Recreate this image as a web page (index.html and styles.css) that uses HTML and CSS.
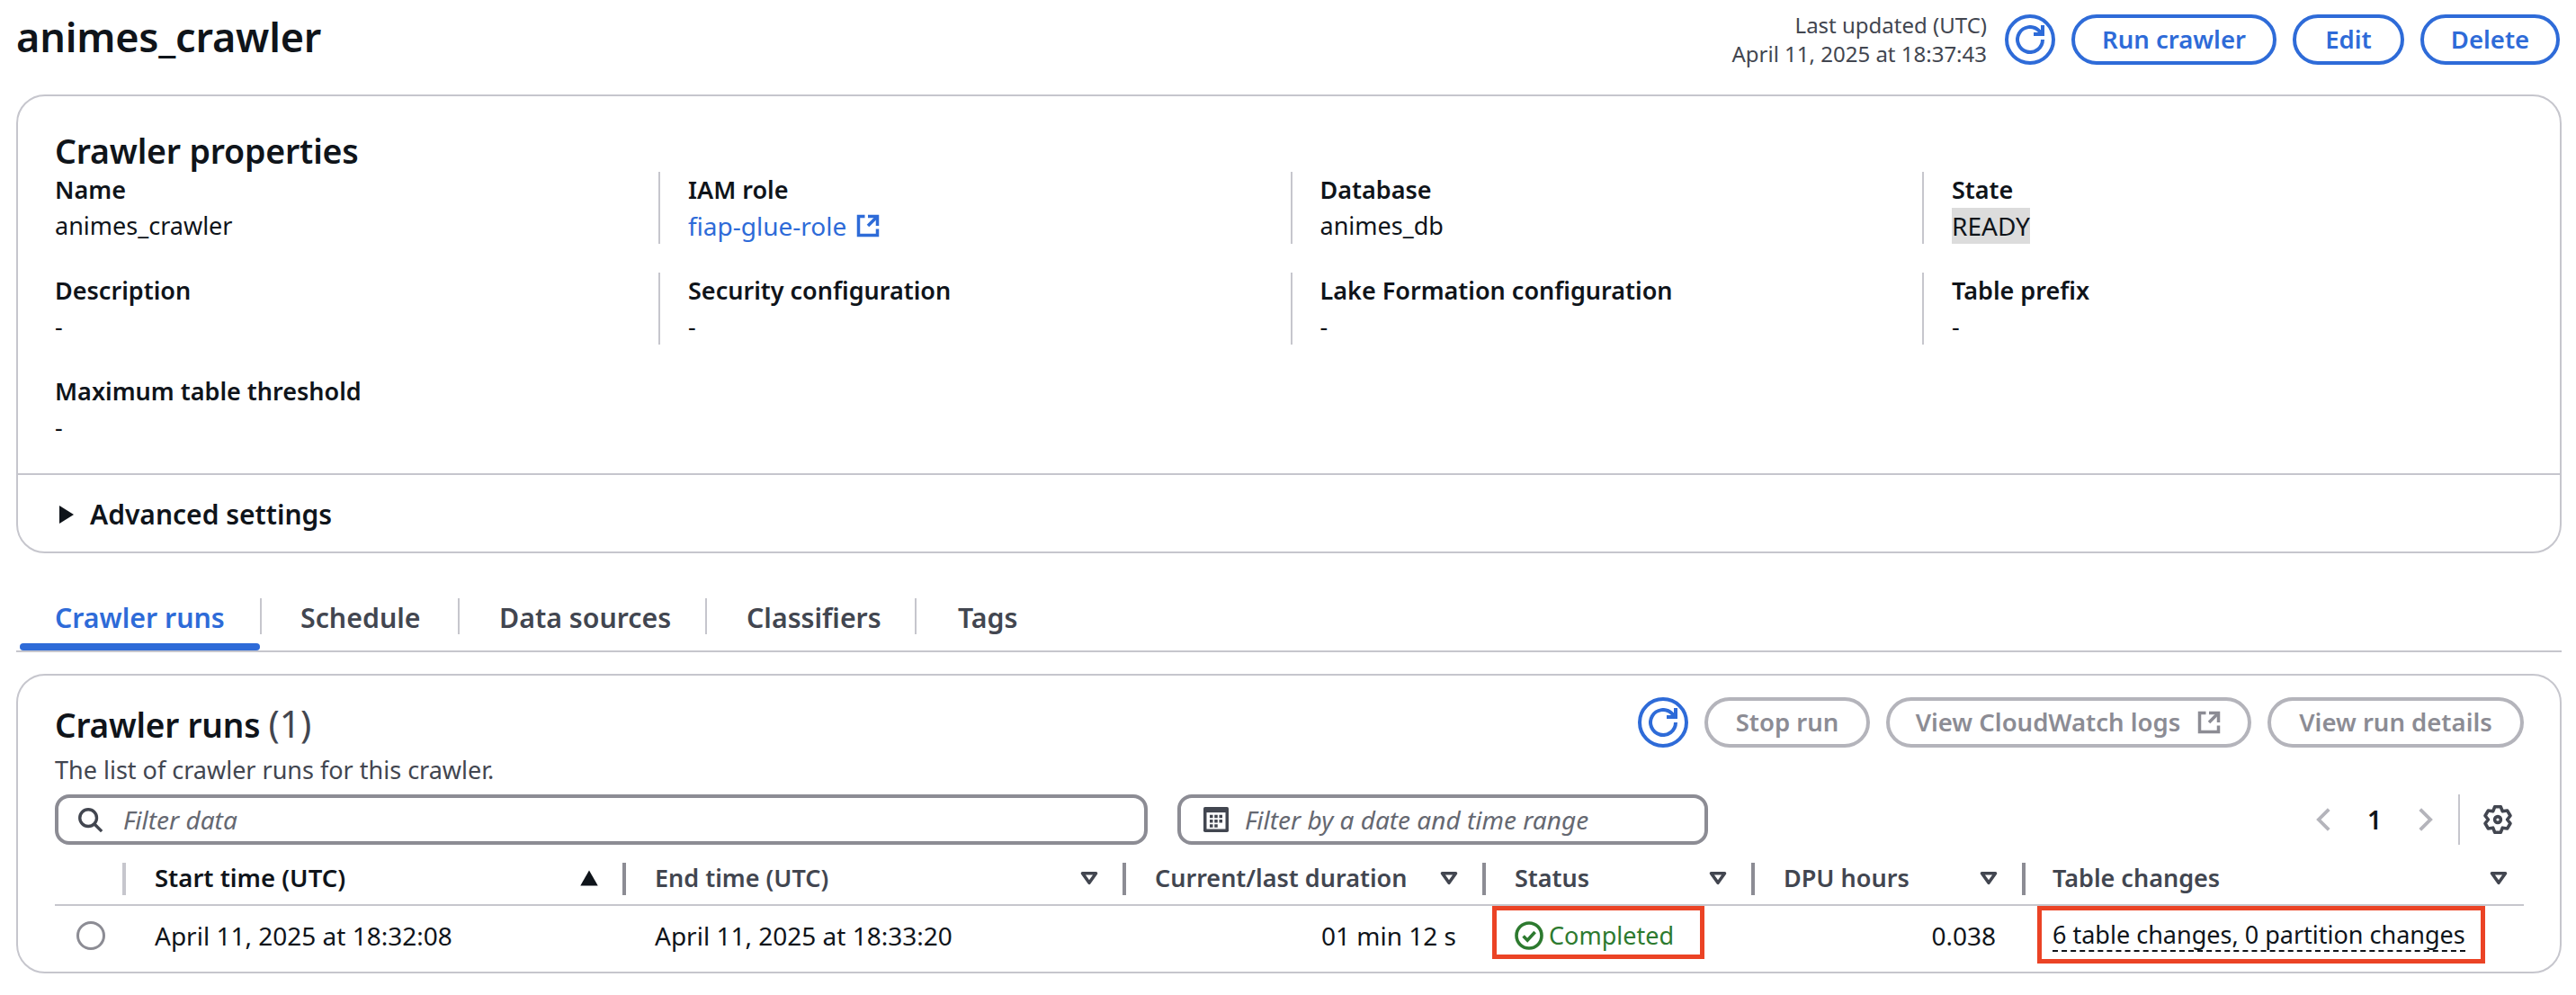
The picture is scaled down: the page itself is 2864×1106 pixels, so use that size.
FILE: index.html
```html
<!DOCTYPE html>
<html lang="en">
<head>
<meta charset="utf-8">
<title>animes_crawler</title>
<link rel="stylesheet" href="styles.css">
</head>
<body>
<svg class="defs" width="0" height="0" aria-hidden="true">
  <symbol id="i-refresh" viewBox="0 0 16 16"><path d="M10 5h5V0"/><path d="M15 8a6.99 6.99 0 1 1-2.05-4.95L15 5"/></symbol>
  <symbol id="i-ext" viewBox="0 0 16 16"><path d="M14 8.01v-6H8"/><path d="M14.02 2 8 8.01"/><path d="M6 2.01H2v12h12v-3.99"/></symbol>
  <symbol id="i-sort" viewBox="0 0 16 16"><path d="M3 4.500h10L8 11.500z"/></symbol>
</svg>

<header class="page-head">
  <h1>animes_crawler</h1>
  <div class="head-actions">
    <div class="updated"><div>Last updated (UTC)</div><div>April 11, 2025 at 18:37:43</div></div>
    <button class="btn btn-icon"><svg class="ic"><use href="#i-refresh"/></svg></button>
    <button class="btn btn-run">Run crawler</button>
    <button class="btn btn-edit">Edit</button>
    <button class="btn btn-delete">Delete</button>
  </div>
</header>

<section class="card props">
  <div class="props-body">
    <h2>Crawler properties</h2>
    <div class="kv-grid">
      <div class="kv first"><div class="k">Name</div><div class="v">animes_crawler</div></div>
      <div class="kv"><div class="k">IAM role</div><div class="v"><a class="link">fiap-glue-role<svg class="ic ic-ext"><use href="#i-ext"/></svg></a></div></div>
      <div class="kv"><div class="k">Database</div><div class="v">animes_db</div></div>
      <div class="kv"><div class="k">State</div><div class="v"><span class="hl">READY</span></div></div>
      <div class="kv first"><div class="k">Description</div><div class="v">-</div></div>
      <div class="kv"><div class="k">Security configuration</div><div class="v">-</div></div>
      <div class="kv"><div class="k">Lake Formation configuration</div><div class="v">-</div></div>
      <div class="kv"><div class="k">Table prefix</div><div class="v">-</div></div>
      <div class="kv first"><div class="k">Maximum table threshold</div><div class="v">-</div></div>
    </div>
  </div>
  <div class="advanced"><span class="caret"></span>Advanced settings</div>
</section>

<nav class="tabs">
  <div class="tab active">Crawler runs</div>
  <div class="tab tab-schedule">Schedule</div>
  <div class="tab tab-data">Data sources</div>
  <div class="tab tab-class">Classifiers</div>
  <div class="tab tab-tags">Tags</div>
</nav>

<section class="card runs">
  <div class="runs-head">
    <div>
      <h2>Crawler runs <span class="count">(1)</span></h2>
      <p class="desc">The list of crawler runs for this crawler.</p>
    </div>
    <div class="runs-actions">
      <button class="btn btn-icon"><svg class="ic"><use href="#i-refresh"/></svg></button>
      <button class="btn off btn-stop">Stop run</button>
      <button class="btn off btn-cw">View CloudWatch logs<svg class="ic ic-ext"><use href="#i-ext"/></svg></button>
      <button class="btn off btn-details">View run details</button>
    </div>
  </div>
  <div class="filters">
    <div class="input input-text">
      <svg class="ic ic-search" viewBox="0 0 16 16"><circle cx="7" cy="7" r="5"/><path d="m15 15-4.46-4.46"/></svg>
      <span>Filter data</span>
    </div>
    <div class="input input-date">
      <svg class="ic-cal" viewBox="0 0 16 16"><rect class="cal-bg" width="16" height="16" rx="1"/><rect class="cal-cut" x="2" y="3.500" width="12" height="10.500"/><path class="cal-bg" d="M4 5h2v2H4zM7 5h2v2H7zM10 5h2v2h-2zM4 8h2v2H4zM7 8h2v2H7zM10 8h2v2h-2zM4 11h2v2H4zM7 11h2v2H7z"/></svg>
      <span>Filter by a date and time range</span>
    </div>
    <div class="pager">
      <svg class="chev" viewBox="0 0 16 16"><path d="M11 1.500 4.500 8l6.500 6.500"/></svg>
      <span class="page">1</span>
      <svg class="chev" viewBox="0 0 16 16"><path d="M5 1.500 11.500 8 5 14.500"/></svg>
      <span class="pager-sep"></span>
      <svg class="gear" viewBox="0 0 16 16"><path d="M9.640.890H6.360L5.350 3.410 2.660 3.020 1.020 5.870 2.700 8 1.020 10.130 2.660 12.980 5.350 12.590 6.360 15.110H9.640L10.650 12.590 13.340 12.980 14.980 10.130 13.300 8 14.980 5.870 13.340 3.020 10.650 3.410z"/><circle cx="8" cy="8" r="1.700"/></svg>
    </div>
  </div>
  <div class="table">
    <div class="th th-sel"></div>
    <div class="th first-sep th-start"><b>Start time (UTC)</b><svg class="sorted" viewBox="0 0 16 16"><path d="M8 2.300 14.500 13.700H1.500z"/></svg></div>
    <div class="th"><span>End time (UTC)</span><svg class="sort"><use href="#i-sort"/></svg></div>
    <div class="th"><span>Current/last duration</span><svg class="sort"><use href="#i-sort"/></svg></div>
    <div class="th"><span>Status</span><svg class="sort"><use href="#i-sort"/></svg></div>
    <div class="th"><span>DPU hours</span><svg class="sort"><use href="#i-sort"/></svg></div>
    <div class="th th-last"><span>Table changes</span><svg class="sort"><use href="#i-sort"/></svg></div>

    <div class="td td-sel"><span class="radio"></span></div>
    <div class="td num">April 11, 2025 at 18:32:08</div>
    <div class="td num">April 11, 2025 at 18:33:20</div>
    <div class="td num right">01 min 12 s</div>
    <div class="td status">
      <svg class="ok" viewBox="0 0 16 16"><circle cx="8" cy="8" r="7"/><path d="m4.800 8.300 2.300 2.300 4.200-4.600"/></svg>Completed
      <span class="mark mark-status"></span>
    </div>
    <div class="td num right">0.038</div>
    <div class="td changes">
      <span class="dashed">6 table changes, 0 partition changes</span>
      <span class="mark mark-changes"></span>
    </div>
  </div>
</section>
</body>
</html>
```

FILE: styles.css
```css
* { box-sizing: border-box; }
html, body { margin: 0; padding: 0; background: #fff; }
body {
  width: 2864px;
  height: 1106px;
  overflow: hidden;
  padding: 12px 16px 0 18px;
  font-family: "Noto Sans", sans-serif;
  font-size: 27px;
  line-height: 40px;
  color: #0f141a;
}
.defs { position: absolute; }
h1, h2, p { margin: 0; }

.ic { fill: none; stroke: currentColor; stroke-width: 2; }
.ic-ext { width: 28px; height: 28px; }

.page-head { display: flex; justify-content: space-between; align-items: flex-start; width: 2830px; height: 93px; }
h1 { font-size: 45px; line-height: 56px; font-weight: 600; letter-spacing: -0.2px; margin-top: 1px; }
.head-actions { display: flex; align-items: center; gap: 18px; margin-right: 2px; }
.updated { text-align: right; color: #424650; font-size: 24px; line-height: 32px; margin-right: 2px; }

.btn {
  display: inline-flex; align-items: center; justify-content: center;
  height: 56px; padding: 0; background: #fff;
  border: 4px solid #2e6bd8; border-radius: 28px;
  color: #2e6bd8; font: 600 27.5px/1 "Noto Sans", sans-serif;
}
.btn-icon { width: 56px; }
.btn-icon .ic { width: 32px; height: 32px; }
.btn-run { width: 228px; }
.btn-edit { width: 124px; }
.btn-delete { width: 155px; }
.off { border-color: #b4b4bb; color: #8c8c94; }
.btn-stop { width: 184px; }
.btn-cw { width: 406px; gap: 18px; }
.btn-details { width: 285px; }

.card { border: 2px solid #c6c6cd; border-radius: 32px; width: 2830px; }
.props { height: 510px; }
.props-body { height: 421px; padding: 39px 0 0 41px; border-bottom: 2px solid #c6c6cd; }
h2 { font-size: 37.500px; line-height: 44px; font-weight: 600; letter-spacing: -0.2px; }
.kv-grid { display: grid; grid-template-columns: 671px repeat(3, 702.500px); grid-auto-rows: 80px; row-gap: 32px; margin-top: 1px; }
.kv { padding-left: 31px; border-left: 2px solid #c6c6cd; }
.kv.first { padding-left: 0; border-left: 0; }
.k { font-weight: 600; }
.link { color: #2e6bd8; display: inline-flex; align-items: center; gap: 10px; font-size: 28px; }
.hl { display: inline-block; background: #dcdcdc; font-size: 28px; }

.advanced { display: flex; align-items: center; height: 87px; padding-left: 46px; font-size: 30px; font-weight: 600; }
.caret { width: 0; height: 0; border-left: 16px solid #0f141a; border-top: 10px solid transparent; border-bottom: 10px solid transparent; margin-right: 18px; }

.tabs { display: flex; height: 85px; margin-top: 25px; border-bottom: 2px solid #c6c6cd; padding-bottom: 18px; align-items: flex-end; font-weight: 600; font-size: 30.300px; color: #424650; width: 2830px; }
.tab { height: 40px; display: flex; align-items: center; padding: 3px 0 0 44px; border-right: 2px solid #c6c6cd; }
.tab.active { color: #2e6bd8; width: 273px; padding-left: 43px; position: relative; }
.tab.active::after { content: ""; position: absolute; left: 4px; right: 0; bottom: -18px; height: 8px; background: #2e6bd8; border-radius: 4px; }
.tab-schedule { width: 220px; padding-left: 43px; }
.tab-data { width: 275px; }
.tab-class { width: 233px; }
.tab-tags { border-right: 0; padding-left: 46px; }

.runs { margin-top: 24px; height: 333px; padding: 0 40px 0 41px; }
.runs-head { display: flex; justify-content: space-between; height: 132px; }
.runs h2 { margin-top: 31px; font-size: 37px; }
.count { font-weight: 400; color: #424650; font-size: 41px; }
.desc { line-height: 40px; color: #424650; margin-top: 8px; }
.runs-actions { display: flex; gap: 18px; margin-top: 24px; align-items: flex-start; }

.filters { display: flex; height: 56px; }
.input { display: flex; align-items: center; height: 56px; border: 4px solid #8c8c94; border-radius: 16px; font-style: italic; color: #656871; font-size: 28px; }
.input-text { width: 1215px; padding-left: 20px; }
.input-date { width: 590px; margin-left: 33px; padding-left: 25px; }
.ic-search { width: 30px; height: 30px; color: #424650; margin-right: 22px; stroke-width: 1.800; }
.ic-cal { width: 28px; height: 28px; margin-right: 18px; }
.cal-bg { fill: #424650; }
.cal-cut { fill: #fff; }
.pager { display: flex; align-items: center; margin-left: auto; padding-right: 13px; }
.chev { width: 28px; height: 28px; fill: none; stroke: #b4b4bb; stroke-width: 2.200; }
.page { font-weight: 600; font-size: 28px; width: 84px; text-align: center; }
.pager-sep { width: 2px; height: 56px; background: #c6c6cd; margin: 0 26px 0 23px; }
.gear { width: 32px; height: 32px; fill: none; stroke: #424650; stroke-width: 1.800; stroke-linejoin: round; }

.table { display: grid; grid-template-columns: 77px 556px 556px 400px 299px 301px 556px; margin-top: 8px; }
.th { height: 60px; display: flex; align-items: center; justify-content: space-between; padding: 0 27px 0 34px; position: relative; font-weight: 600; color: #424650; border-bottom: 2px solid #c6c6cd; white-space: nowrap; }
.th b { color: #0f141a; font-weight: 600; font-size: 27.500px; }
.th::before { content: ""; position: absolute; left: -2px; top: 12px; height: 36px; width: 4px; background: #8c8c94; }
.th-sel::before { display: none; }
.first-sep::before { background: #c6c6cd; }
.th-last { padding-right: 16px; padding-left: 32px; }
.sort { width: 24px; height: 24px; fill: none; stroke: #424650; stroke-width: 2.400; stroke-linejoin: round; }
.sorted { width: 24px; height: 24px; fill: #0f141a; }
.td { height: 65px; display: flex; align-items: center; padding-left: 34px; position: relative; white-space: nowrap; }
.num { font-size: 28px; }
.td-sel { padding-left: 0; justify-content: flex-start; }
.radio { width: 32px; height: 32px; border: 3px solid #8c8c94; border-radius: 50%; margin-left: 24px; }
.right { justify-content: flex-end; padding-right: 31px; }
.status { color: #2d7a2f; }
.ok { width: 32px; height: 32px; fill: none; stroke: #2d7a2f; stroke-width: 1.800; margin-right: 6px; }
.changes { padding-left: 32px; }
.dashed { border-bottom: 2px dashed #0f141a; line-height: 34px; }
.mark { position: absolute; border: 5px solid #eb4325; pointer-events: none; }
.mark-status { left: 9px; top: 0; width: 236px; height: 59px; }
.mark-changes { left: 15px; top: 0; width: 498px; height: 64px; }
```
